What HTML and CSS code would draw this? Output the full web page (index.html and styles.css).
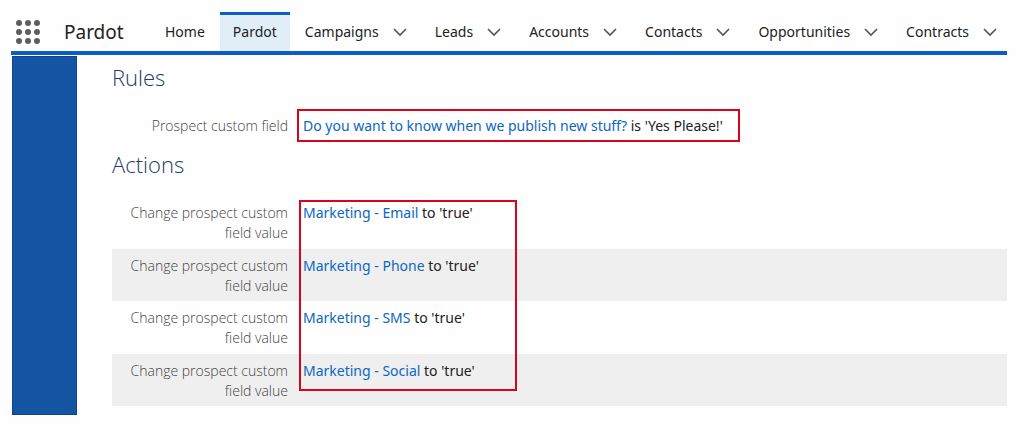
FILE: index.html
```html
<!DOCTYPE html>
<html lang="en">
<head>
  <meta charset="UTF-8">
  <meta name="viewport" content="width=device-width, initial-scale=1.0">
  <title>Pardot</title>
  <link rel="stylesheet" href="styles.css">
</head>
<body>
  <header class="navbar">
    <button class="launcher" aria-label="App Launcher">
      <svg width="24" height="24" viewBox="0 0 24 24" fill="#5f5d5b">
        <circle cx="3" cy="3" r="3"/><circle cx="12" cy="3" r="3"/><circle cx="21" cy="3" r="3"/>
        <circle cx="3" cy="12" r="3"/><circle cx="12" cy="12" r="3"/><circle cx="21" cy="12" r="3"/>
        <circle cx="3" cy="21" r="3"/><circle cx="12" cy="21" r="3"/><circle cx="21" cy="21" r="3"/>
      </svg>
    </button>
    <span class="app-name">Pardot</span>
    <nav class="tabs">
      <a class="tab" href="#">Home</a>
      <a class="tab active" href="#">Pardot</a>
      <a class="tab" href="#">Campaigns <svg class="chevron" viewBox="0 0 14 9"><path d="M1 1l6 6 6-6"/></svg></a>
      <a class="tab" href="#">Leads <svg class="chevron" viewBox="0 0 14 9"><path d="M1 1l6 6 6-6"/></svg></a>
      <a class="tab" href="#">Accounts <svg class="chevron" viewBox="0 0 14 9"><path d="M1 1l6 6 6-6"/></svg></a>
      <a class="tab" href="#">Contacts <svg class="chevron" viewBox="0 0 14 9"><path d="M1 1l6 6 6-6"/></svg></a>
      <a class="tab" href="#">Opportunities <svg class="chevron" viewBox="0 0 14 9"><path d="M1 1l6 6 6-6"/></svg></a>
      <a class="tab" href="#">Contracts <svg class="chevron" viewBox="0 0 14 9"><path d="M1 1l6 6 6-6"/></svg></a>
    </nav>
  </header>

  <div class="page">
    <aside class="sidebar"></aside>
    <main class="content">
      <h2>Rules</h2>
      <dl class="rules">
        <div class="row">
          <dt>Prospect custom field</dt>
          <dd class="marked"><a href="#">Do you want to know when we publish new stuff?</a> is 'Yes Please!'</dd>
        </div>
      </dl>

      <h2>Actions</h2>
      <dl class="actions">
        <div class="row">
          <dt>Change prospect custom field value</dt>
          <dd><a href="#">Marketing - Email</a> to 'true'</dd>
        </div>
        <div class="row">
          <dt>Change prospect custom field value</dt>
          <dd><a href="#">Marketing - Phone</a> to 'true'</dd>
        </div>
        <div class="row">
          <dt>Change prospect custom field value</dt>
          <dd><a href="#">Marketing - SMS</a> to 'true'</dd>
        </div>
        <div class="row">
          <dt>Change prospect custom field value</dt>
          <dd><a href="#">Marketing - Social</a> to 'true'</dd>
        </div>
        <div class="highlight"></div>
      </dl>
    </main>
  </div>
</body>
</html>
```
FILE: styles.css
```css
* {
  box-sizing: border-box;
}

body {
  margin: 0;
  padding: 12px 10px 10px 11px;
  background: #fefefe;
  color: #222;
  font-family: "Noto Sans", "Open Sans", sans-serif;
  font-size: 14px;
  line-height: 20px;
}

a {
  color: #0b67c2;
  text-decoration: none;
}

/* top navigation */
.navbar {
  display: flex;
  align-items: center;
  height: 43px;
  border-bottom: 4px solid #0b5cc4;
}

.launcher {
  display: flex;
  padding: 0;
  margin: 0 24px 0 5px;
  border: none;
  background: none;
  cursor: pointer;
}

.app-name {
  width: 88px;
  font-size: 19px;
}

.tabs {
  display: flex;
  flex: 1;
  align-self: stretch;
  justify-content: space-between;
  margin-right: -3px;
}

.tab {
  display: flex;
  align-items: center;
  gap: 14px;
  padding: 0 13px;
  color: #222;
  white-space: nowrap;
}

.tab.active {
  background: #e1eef8;
  box-shadow: inset 0 3px #0b5cc4;
}

.chevron {
  width: 14px;
  height: 9px;
  margin-top: 2px;
  fill: none;
  stroke: #555;
  stroke-width: 1.6;
}

/* page body */
.page {
  display: flex;
  padding: 1px 0 0 1px;
}

.sidebar {
  flex: 0 0 65px;
  background: #1553a3;
  border: 1px solid #0c4590;
}

.content {
  flex: 1;
  padding: 8px 0 9px 35px;
}

h2 {
  margin: 0;
  font-family: "Open Sans", sans-serif;
  font-size: 22px;
  font-weight: 300;
  line-height: 26px;
  color: #1f3a66;
}

dl {
  margin: 0;
}

.row {
  display: grid;
  grid-template-columns: 176px 1fr;
  column-gap: 15px;
}

dt {
  color: #444;
  font-family: "Open Sans", sans-serif;
  font-weight: 300;
  text-align: right;
}

dd {
  margin: 0;
}

.rules {
  padding: 19px 0 9px;
}

.rules .row {
  align-items: center;
  column-gap: 9px;
}

.marked {
  justify-self: start;
  padding: 5px 15px 4px 4px;
  border: 2px solid #d9041b;
}

.actions {
  position: relative;
  padding-top: 19px;
}

.actions .row {
  min-height: 52px;
  padding: 7px 0 5px;
}

.actions .row:nth-child(odd) {
  min-height: 53px;
}

.actions .row:nth-child(even) {
  background: #efefef;
}

/* label is cut off just under the second line */
.actions .row:first-child dt {
  height: 35px;
  overflow: hidden;
}

.highlight {
  position: absolute;
  top: 23px;
  bottom: 15px;
  left: 187px;
  width: 218px;
  border: 2px solid #d9041b;
}
```
